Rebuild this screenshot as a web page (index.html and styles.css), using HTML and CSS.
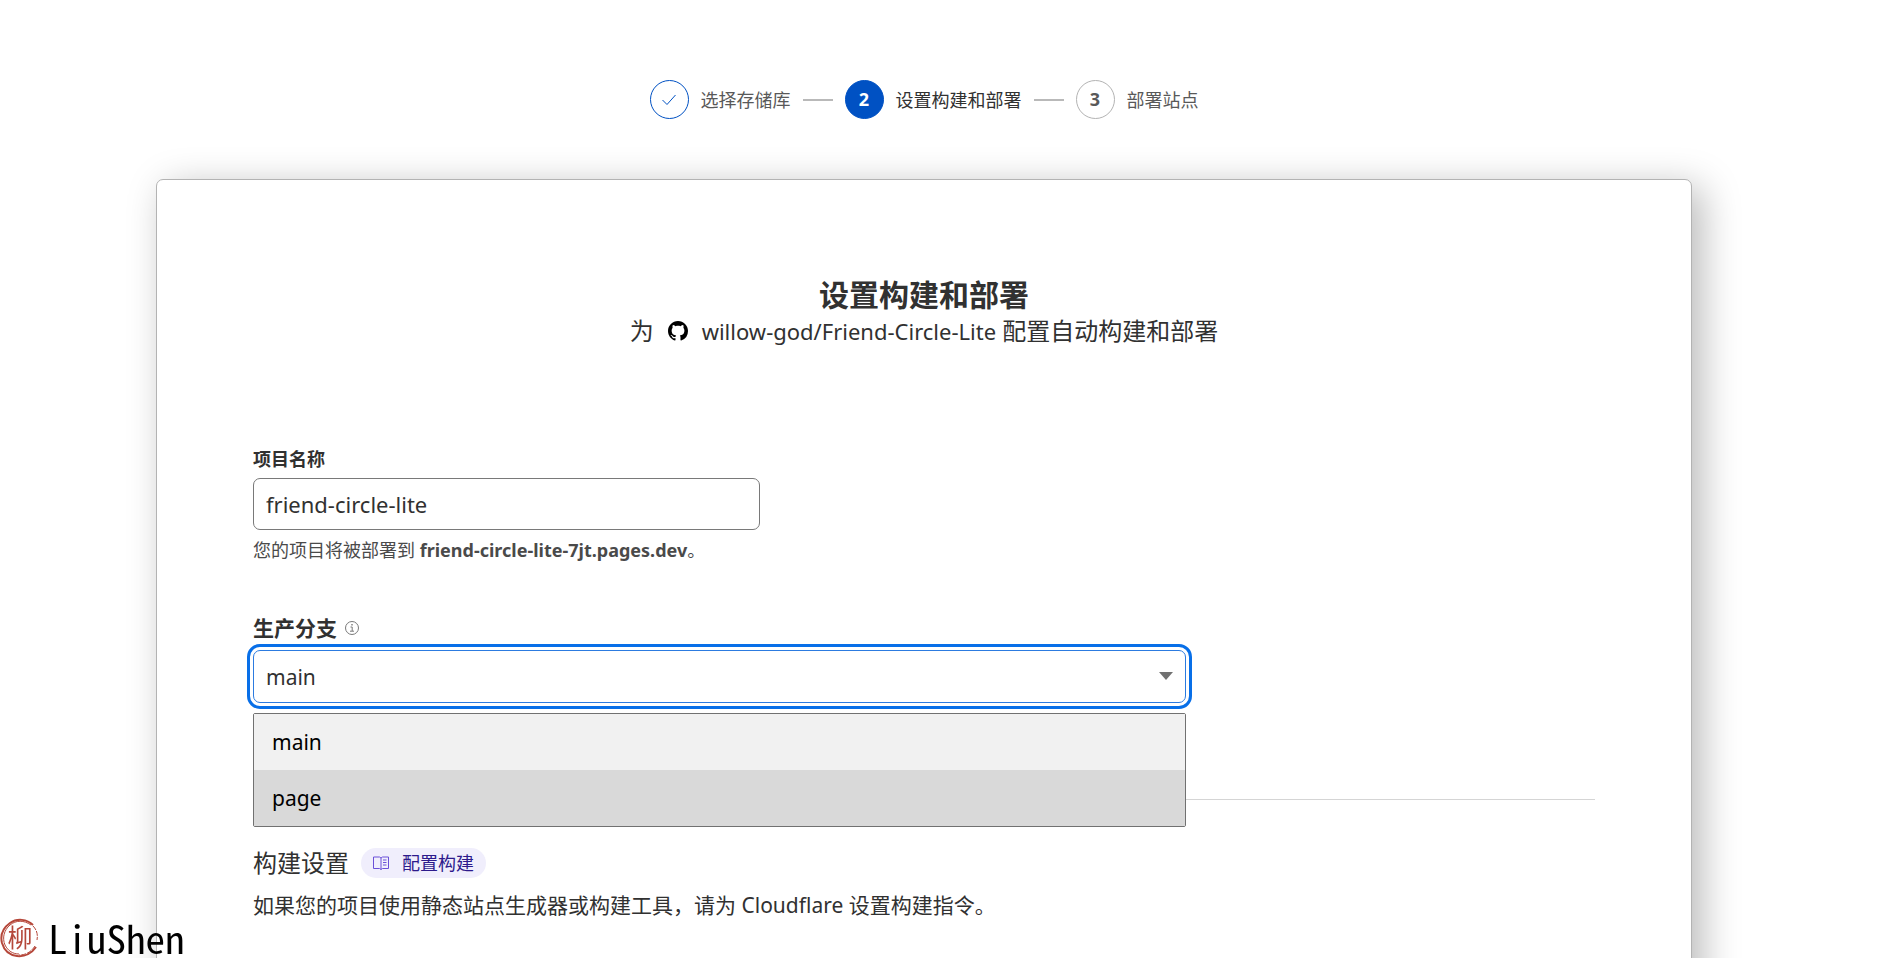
FILE: index.html
```html
<!DOCTYPE html>
<html lang="zh-CN">
<head>
<meta charset="utf-8">
<meta name="viewport" content="width=device-width, initial-scale=1">
<title>设置构建和部署</title>
<link rel="stylesheet" href="styles.css">
</head>
<body>
<main class="page">
  <ol class="steps">
    <li class="step">
      <span class="step-mark step-mark-done">
        <svg width="16" height="16" viewBox="0 0 16 16" fill="none" stroke="currentColor" aria-hidden="true"><path d="M1.5 8 6 12.5 14.500 3"/></svg>
      </span>
      <span>选择存储库</span>
    </li>
    <li class="step-line" aria-hidden="true"></li>
    <li class="step step-current" aria-current="step">
      <span class="step-mark step-mark-current">2</span>
      <span>设置构建和部署</span>
    </li>
    <li class="step-line" aria-hidden="true"></li>
    <li class="step">
      <span class="step-mark">3</span>
      <span>部署站点</span>
    </li>
  </ol>

  <form class="card">
    <header class="card-head">
      <h1 class="title">设置构建和部署</h1>
      <p class="subtitle">
        <span>为</span>
        <svg class="github" width="20" height="20" viewBox="0 0 16 16" fill="currentColor" aria-hidden="true"><path d="M8 0C3.580 0 0 3.580 0 8c0 3.540 2.290 6.530 5.470 7.590.4.070.550-.170.550-.380 0-.190-.010-.820-.010-1.490-2.010.370-2.530-.490-2.690-.940-.090-.230-.480-.940-.820-1.130-.280-.150-.680-.520-.010-.530.630-.010 1.080.580 1.230.820.720 1.210 1.870.870 2.330.660.070-.520.280-.870.510-1.070-1.780-.200-3.640-.890-3.640-3.950 0-.870.310-1.590.820-2.150-.080-.200-.360-1.020.080-2.120 0 0 .670-.210 2.200.820.640-.180 1.320-.270 2-.270s1.360.090 2 .270c1.530-1.040 2.200-.820 2.200-.820.440 1.100.160 1.920.080 2.120.510.560.820 1.270.820 2.150 0 3.070-1.870 3.750-3.650 3.950.290.250.540.730.540 1.480 0 1.070-.010 1.930-.010 2.200 0 .210.150.460.550.380A8.010 8.010 0 0 0 16 8c0-4.420-3.580-8-8-8z"/></svg>
        <span><span class="repo">willow-god/Friend-Circle-Lite</span> 配置自动构建和部署</span>
      </p>
    </header>

    <div class="field project">
      <label class="label" for="project">项目名称</label>
      <input class="control control-text" id="project" type="text" value="friend-circle-lite">
      <p class="hint">您的项目将被部署到 <strong>friend-circle-lite-7jt.pages.dev</strong>。</p>
    </div>

    <div class="field branch">
      <div class="label-row">
        <label class="label label-large" for="branch">生产分支</label>
        <svg class="info" width="14" height="14" viewBox="0 0 14 14" fill="none" stroke="currentColor" aria-hidden="true"><circle cx="7" cy="7" r="6.500"/><path d="M5.500 6H7.200V10M5 10.200H9"/><path d="M6.300 3.800H7.700" stroke-width="1.400"/></svg>
      </div>
      <div class="select-wrap">
        <select class="control select" id="branch">
          <option selected>main</option>
          <option>page</option>
        </select>
        <svg class="caret" width="14" height="8" viewBox="0 0 14 8" fill="currentColor" aria-hidden="true"><path d="M0 0H14L7 8Z"/></svg>
        <ul class="menu" role="listbox" aria-label="生产分支">
          <li class="option" role="option" aria-selected="true">main</li>
          <li class="option option-active" role="option" aria-selected="false">page</li>
        </ul>
      </div>
    </div>

    <hr class="rule">

    <section class="build">
      <div class="build-head">
        <h2 class="build-title">构建设置</h2>
        <a class="pill" href="#build">
          <svg width="16" height="14" viewBox="0 0 16 14" fill="none" stroke="currentColor" aria-hidden="true"><path d="M.5 1H6.500L8 2L9.500 1H15.500V12.500H9.500L8 13.500L6.500 12.500H.5ZM8 2V13.500M10 4H13.500M10 6.500H13.500M10 9H13.500"/></svg>
          <span>配置构建</span>
        </a>
      </div>
      <p class="build-text">如果您的项目使用静态站点生成器或构建工具，请为 Cloudflare 设置构建指令。</p>
    </section>
  </form>

  <div class="brand">
    <svg class="seal" width="40" height="40" viewBox="0 0 40 40" aria-hidden="true">
      <g fill="none" stroke="#b5473a">
        <path d="M33 7C27 1 17 0 10 5 3 10 0 17 2 25c2 7 7 12 15 13 8 1 15-3 19-9" stroke-width="2"/>
        <path d="M31 7C24 2 16 2 10 7 4 12 2 20 5 27c3 6 8 9 14 9" stroke-width="1"/>
        <path d="M33 8c4 4 5 9 4 14M35 28c-4 6-9 9-16 9" stroke-width="1" stroke-dasharray="5 1"/>
      </g>
      <text class="seal-text" x="20" y="29" text-anchor="middle">柳</text>
    </svg>
    <span class="brand-name">LiuShen</span>
  </div>
</main>
</body>
</html>
```
FILE: styles.css
```css
* {
  box-sizing: border-box;
}

body,
h1,
h2,
p,
ol,
ul {
  margin: 0;
  padding: 0;
}

ol,
ul {
  list-style: none;
}

body {
  color: #313131;
  background: #fff;
  font-family: "Noto Sans", "Noto Sans CJK SC", sans-serif;
  font-size: 18px;
  line-height: 24px;
}

.page {
  height: 100vh;
  overflow: hidden;
  padding: 80px 186px 0 156px;
}

.steps {
  display: flex;
  align-items: center;
  justify-content: center;
  gap: 12px;
  margin-bottom: 60px;
  color: #595959;
}

.step {
  display: flex;
  align-items: center;
  gap: 12px;
}

.step-current {
  color: #313131;
}

.step-mark {
  display: flex;
  align-items: center;
  justify-content: center;
  width: 39px;
  height: 39px;
  padding-bottom: 2px;
  border: 1px solid #b3b3b3;
  border-radius: 50%;
  font-weight: 700;
}

.step-mark-done {
  padding: 0;
  border-color: #0051c3;
  color: #0051c3;
}

.step-mark-current {
  border-color: #0051c3;
  background: #0051c3;
  color: #fff;
}

.step-line {
  width: 30px;
  height: 2px;
  background: #b9b9b9;
}

.card {
  padding: 96px;
  border: 1px solid #b3b3b3;
  border-radius: 7px;
  background: #fff;
  box-shadow: 10px 8px 38px rgba(0, 0, 0, 0.28);
}

.card-head {
  display: flex;
  flex-direction: column;
  align-items: center;
  margin-bottom: 98px;
}

.title {
  font-size: 30px;
  line-height: 37px;
}

.subtitle {
  display: flex;
  align-items: center;
  gap: 14px;
  font-size: 24px;
  line-height: 36px;
}

.github {
  color: #000;
}

.repo {
  font-size: 22px;
}

.field {
  display: flex;
  flex-direction: column;
}

.project {
  max-width: 507px;
  margin-bottom: 52px;
}

.label {
  margin-bottom: 7px;
  font-weight: 700;
}

.control {
  width: 100%;
  height: 52px;
  padding: 0 12px;
  border: 1px solid #797979;
  border-radius: 7px;
  background: #fff;
  color: #313131;
  font: inherit;
  font-size: 21px;
}

.control-text {
  font-size: 22px;
}

.hint {
  margin-top: 8px;
  color: #4a4a4a;
}

.branch {
  max-width: 933px;
  margin-bottom: 96px;
}

.label-row {
  display: flex;
  align-items: center;
  gap: 8px;
  margin-bottom: 8px;
}

.label-large {
  margin: 0;
  font-size: 21px;
  line-height: 28px;
}

.info {
  color: #797979;
}

.select-wrap {
  position: relative;
}

.select {
  display: block;
  height: 53px;
  appearance: none;
  border-color: #2c7be0;
  outline: 3px solid #086fe8;
  outline-offset: 3px;
}

.caret {
  position: absolute;
  top: 22px;
  right: 13px;
  color: #717171;
  pointer-events: none;
}

.menu {
  position: absolute;
  top: 100%;
  left: 0;
  right: 0;
  margin-top: 10px;
  border: 1px solid #717171;
  border-radius: 2px;
  color: #000;
  font-size: 21px;
}

.option {
  height: 56px;
  padding: 0 18px;
  background: #f1f1f1;
  line-height: 56px;
}

.option-active {
  background: #d9d9d9;
}

.rule {
  margin: 0 0 48px;
  border: 0;
  border-top: 1px solid #d5d5d5;
}

.build-head {
  display: flex;
  align-items: center;
  gap: 12px;
  margin-bottom: 12px;
}

.build-title {
  font-size: 24px;
  font-weight: 400;
  line-height: 30px;
}

.pill {
  display: flex;
  align-items: center;
  gap: 13px;
  height: 30px;
  padding: 0 12px;
  border-radius: 15px;
  background: #f0eefc;
  color: #6b50d8;
  text-decoration: none;
}

.pill span {
  color: #2d1a8c;
}

.build-text {
  font-size: 21px;
  line-height: 30px;
}

.brand {
  position: fixed;
  bottom: 0;
  left: 0;
  display: flex;
  align-items: center;
  gap: 8px;
}

.seal-text {
  fill: #b5473a;
  font-family: "Noto Sans CJK SC", sans-serif;
  font-size: 25px;
}

.brand-name {
  padding-bottom: 3px;
  color: #000;
  font-family: "Noto Sans Mono CJK SC", "Noto Sans CJK SC", sans-serif;
  font-feature-settings: "hwid";
  font-size: 39px;
  line-height: 56px;
}

.brand {
  height: 40px;
}
```
